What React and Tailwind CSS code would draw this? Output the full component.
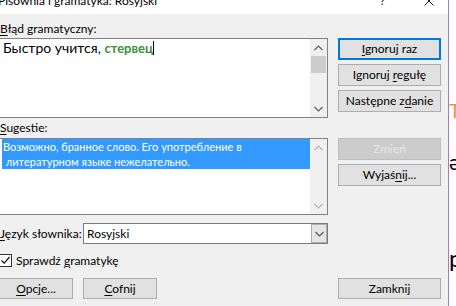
import React from "react";

function U({ children }) {
  return <span className="underline decoration-1 underline-offset-[2px]">{children}</span>;
}

function Btn({ children, variant = "normal", className = "" }) {
  const v =
    variant === "focus"
      ? "border-2 border-[#0078d7] bg-[#e1e1e1] text-black"
      : variant === "disabled"
      ? "border border-[#bfbfbf] bg-[#cccccc] text-[#e6e6e6]"
      : "border border-[#adadad] bg-[#e1e1e1] text-black";
  return (
    <div className={`flex items-center justify-center whitespace-nowrap text-[12px] leading-[14px] ${v} ${className}`}>
      {children}
    </div>
  );
}

function Chevron({ up, color }) {
  return (
    <svg width="9" height="6" viewBox="0 0 9 6" className="block">
      <polyline
        points={up ? "0.5,5 4.5,1 8.5,5" : "0.5,1 4.5,5 8.5,1"}
        fill="none"
        stroke={color}
        strokeWidth="1.2"
      />
    </svg>
  );
}

function VScroll({ thumb, color }) {
  return (
    <div className="flex w-[17px] flex-col bg-[#f0f0f0]">
      <div className="flex h-[17px] items-center justify-center">
        <Chevron up color={color} />
      </div>
      {thumb && <div className="mx-[1px] h-[17px] bg-[#cdcdcd]" />}
      <div className="flex-1" />
      <div className="flex h-[17px] items-center justify-center">
        <Chevron color={color} />
      </div>
    </div>
  );
}

export default function App() {
  return (
    <div className="flex h-[306px] w-[456px] overflow-hidden bg-white font-['Lato','Noto_Sans',sans-serif] text-[12px] text-black">
      <div className="flex w-[449px] flex-col border-r border-[#a67cb8]">
        {/* title bar */}
        <div className="flex h-[14px] items-start overflow-hidden bg-white">
          <div className="-ml-[2px] -mt-[7px] whitespace-nowrap text-[12px] leading-[16px] text-black">
            Pisownia i gramatyka: Rosyjski
          </div>
          <div className="flex-1" />
          <div className="-mt-[7px] mr-[39px] text-[12px] leading-[16px] text-[#222]">?</div>
          <svg width="10" height="10" viewBox="0 0 10 10" className="-mt-[4px] mr-[14px]">
            <path d="M0.5 0.5 L9.5 9.5 M9.5 0.5 L0.5 9.5" stroke="#222" strokeWidth="1" />
          </svg>
        </div>

        {/* body */}
        <div className="flex flex-1 flex-col bg-[#f0f0f0]">
          <div className="-ml-[1px] flex w-[442px] flex-col">
            {/* row 1 */}
            <div className="flex gap-x-[10px]">
              <div className="flex w-[329px] flex-col">
                <div className="h-[24px] whitespace-nowrap pl-[1px] pt-[8px] leading-[14px]">
                  <U>B</U>łąd gramatyczny:
                </div>
                <div className="flex h-[80px] border border-[#828282] bg-white">
                  <div className="flex-1 whitespace-nowrap pl-[3px] text-[14px] leading-[18px]">
                    Быстро учится,{" "}
                    <span className="text-[13px] font-bold text-[#3c8f3c]">стервец</span>
                    <span className="relative top-[2px] inline-block h-[14px] w-[1px] bg-black align-baseline" />
                  </div>
                  <VScroll thumb color="#606060" />
                </div>
              </div>
              <div className="flex w-[103px] flex-col gap-[4px] pt-[24px]">
                <Btn variant="focus" className="h-[22px]">
                  <span><U>I</U>gnoruj raz</span>
                </Btn>
                <Btn className="h-[22px]">
                  <span>Ignoruj <U>r</U>egułę</span>
                </Btn>
                <Btn className="h-[22px]">
                  <span>Następne z<U>d</U>anie</span>
                </Btn>
              </div>
            </div>

            {/* row 2 */}
            <div className="flex gap-x-[10px]">
              <div className="flex w-[329px] flex-col">
                <div className="h-[20px] pl-[1px] pt-[3px] leading-[14px]">
                  <U>S</U>ugestie:
                </div>
                <div className="flex h-[77px] border border-[#828282] bg-white">
                  <div className="flex-1 pl-[2px]">
                    <div className="bg-[#3399ff] pl-[1px] text-[11px] leading-[15px] text-white">
                      <div className="whitespace-nowrap">Возможно, бранное слово. Его употребление в</div>
                      <div className="whitespace-pre"> литературном языке нежелательно.</div>
                    </div>
                  </div>
                  <VScroll color="#b4b4b4" />
                </div>
              </div>
              <div className="flex w-[103px] flex-col gap-[4px] pt-[20px]">
                <Btn variant="disabled" className="h-[22px]">
                  <span>Zmień</span>
                </Btn>
                <Btn className="h-[22px]">
                  <span>Wyjaś<U>n</U>ij...</span>
                </Btn>
              </div>
            </div>

            {/* language */}
            <div className="mt-[8px] flex w-[329px] items-center">
              <div className="w-[84px] whitespace-nowrap pl-[1px] leading-[14px]">
                <U>J</U>ęzyk słownika:
              </div>
              <div className="flex h-[21px] flex-1 items-center border border-[#7a7a7a] bg-white">
                <div className="flex-1 pl-[3px] leading-[14px]">Rosyjski</div>
                <div className="flex h-[19px] w-[16px] items-center justify-center border border-[#adadad] bg-[#e5e5e5]">
                  <Chevron color="#555" />
                </div>
              </div>
            </div>

            {/* checkbox */}
            <div className="mt-[10px] flex h-[13px] items-center">
              <div className="flex h-[13px] w-[13px] items-center justify-center border border-[#333] bg-white">
                <svg width="11" height="11" viewBox="0 0 11 11">
                  <path d="M1.5 5.5 L4.2 8.2 L9.5 2" fill="none" stroke="#111" strokeWidth="1.2" />
                </svg>
              </div>
              <div className="ml-[4px] whitespace-nowrap leading-[14px]">
                Sprawdź <U>g</U>ramatykę
              </div>
            </div>

            {/* bottom buttons */}
            <div className="mt-[11px] flex">
              <Btn className="h-[21px] w-[74px]">
                <span><U>O</U>pcje...</span>
              </Btn>
              <Btn className="ml-[10px] h-[21px] w-[74px]">
                <span><U>C</U>ofnij</span>
              </Btn>
              <div className="flex-1" />
              <Btn className="h-[21px] w-[103px]">
                <span>Zamknij</span>
              </Btn>
            </div>
          </div>
        </div>
      </div>

      {/* document behind */}
      <div className="flex w-[7px] flex-col overflow-hidden bg-white leading-[20px]">
        <div className="mt-[100px] text-[20px] text-[#d9a040]">T</div>
        <div className="mt-[32px] text-[22px] text-black">ə</div>
        <div className="mt-[76px] text-[24px] text-black">p</div>
      </div>
    </div>
  );
}
